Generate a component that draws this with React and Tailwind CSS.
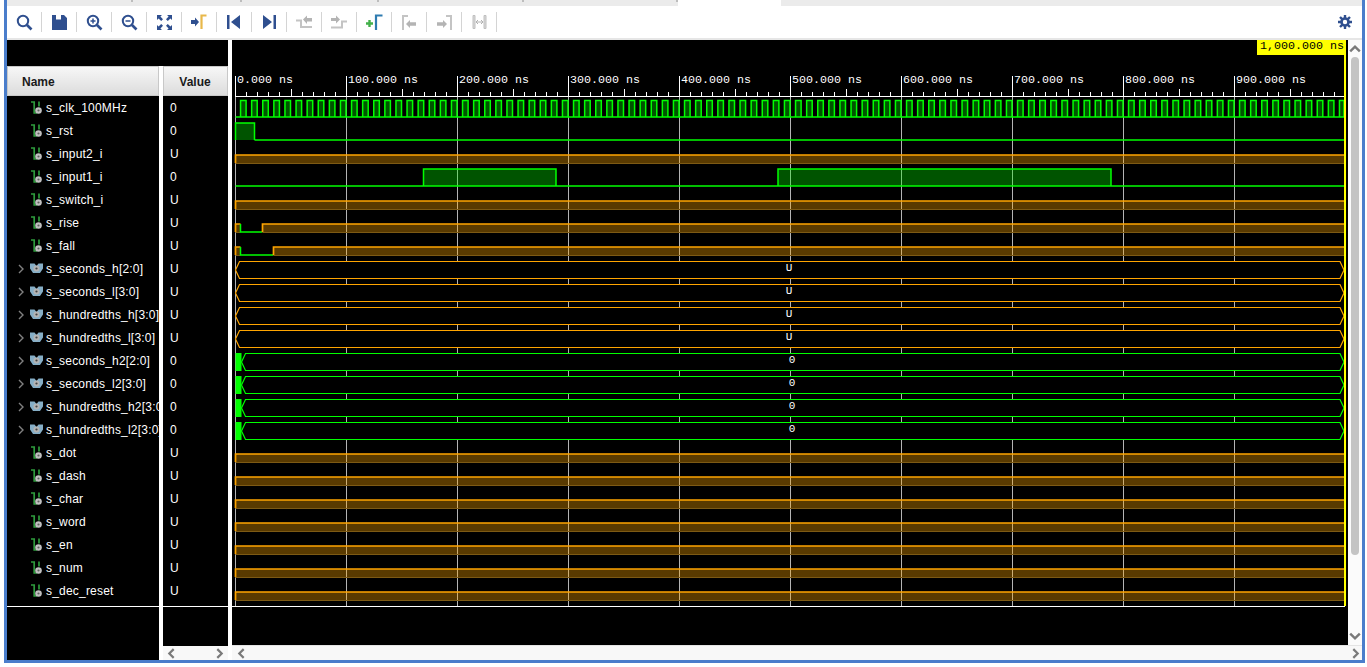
import React from "react";

const navy = "#2f4f8f";
const GREEN = "#00ff00";
const ORANGE = "#ffa500";

const rows = [
  { name: "s_clk_100MHz", value: "0", kind: "clk" },
  { name: "s_rst", value: "0", kind: "rst" },
  { name: "s_input2_i", value: "U", kind: "u" },
  { name: "s_input1_i", value: "0", kind: "input1" },
  { name: "s_switch_i", value: "U", kind: "u" },
  { name: "s_rise", value: "U", kind: "rise" },
  { name: "s_fall", value: "U", kind: "fall" },
  { name: "s_seconds_h[2:0]", value: "U", kind: "busU", bus: true },
  { name: "s_seconds_l[3:0]", value: "U", kind: "busU", bus: true },
  { name: "s_hundredths_h[3:0]", value: "U", kind: "busU", bus: true },
  { name: "s_hundredths_l[3:0]", value: "U", kind: "busU", bus: true },
  { name: "s_seconds_h2[2:0]", value: "0", kind: "bus0", bus: true },
  { name: "s_seconds_l2[3:0]", value: "0", kind: "bus0", bus: true },
  { name: "s_hundredths_h2[3:0]", value: "0", kind: "bus0", bus: true },
  { name: "s_hundredths_l2[3:0]", value: "0", kind: "bus0", bus: true },
  { name: "s_dot", value: "U", kind: "u" },
  { name: "s_dash", value: "U", kind: "u" },
  { name: "s_char", value: "U", kind: "u" },
  { name: "s_word", value: "U", kind: "u" },
  { name: "s_en", value: "U", kind: "u" },
  { name: "s_num", value: "U", kind: "u" },
  { name: "s_dec_reset", value: "U", kind: "u" },
];

const X0 = 235.5;
const X1 = 1344;
const tx = (ns) => 235 + ns * 1.11;

// toolbar icons
const Search = ({ plus, minus }) => (
  <svg width="17" height="17" viewBox="0 0 17 17" fill="none">
    <circle cx="7" cy="7" r="5.2" stroke={navy} strokeWidth="2" />
    <path d="M11 11l4.5 4.5" stroke={navy} strokeWidth="2.6" />
    {(plus || minus) && <path d="M4.5 7h5" stroke={navy} strokeWidth="1.5" />}
    {plus && <path d="M7 4.5v5" stroke={navy} strokeWidth="1.5" />}
  </svg>
);

const Save = () => (
  <svg width="15" height="15" viewBox="0 0 15 15">
    <path d="M0 0h4v4.5h5V0h3l3 3v12H0z" fill={navy} />
  </svg>
);

const Fit = () => (
  <svg width="15" height="15" viewBox="0 0 15 15" fill={navy}>
    <path d="M0 0h5L3.4 1.6 6 4.2 4.2 6 1.6 3.4 0 5z" />
    <path d="M15 0v5l-1.6-1.6L10.8 6 9 4.2l2.6-2.6L10 0z" />
    <path d="M0 15v-5l1.6 1.6L4.2 9 6 10.8l-2.6 2.6L5 15z" />
    <path d="M15 15h-5l1.6-1.6L9 10.8 10.8 9l2.6 2.6L15 10z" />
  </svg>
);

const ToCursor = () => (
  <svg width="16" height="16" viewBox="0 0 16 16">
    <path d="M0 6h4V3.5L8 8l-4 4.5V10H0z" fill={navy} />
    <path d="M10.5 15V1.5h5" fill="none" stroke="#e8b84a" strokeWidth="2.2" />
  </svg>
);

const Prev = () => (
  <svg width="14" height="14" viewBox="0 0 14 14" fill={navy}>
    <path d="M0 0h2.5v14H0zM13 0v14L4 7z" />
  </svg>
);

const Next = () => (
  <svg width="14" height="14" viewBox="0 0 14 14" fill={navy}>
    <path d="M1 0v14l9-7zM11.5 0H14v14h-2.5z" />
  </svg>
);

const PrevEdge = () => (
  <svg width="16" height="14" viewBox="0 0 16 14">
    <path d="M0 5.5h5V12h11" fill="none" stroke="#c4c4c4" strokeWidth="2" />
    <path d="M7 4.500L11 .5V3h5v3.500h-5V9z" fill="#b4b4b4" />
  </svg>
);

const NextEdge = () => (
  <svg width="16" height="14" viewBox="0 0 16 14">
    <path d="M0 3h5V.5L9 4.5 5 8.500V6H0z" fill="#b4b4b4" />
    <path d="M16 6.500h-5v6H0" fill="none" stroke="#c4c4c4" strokeWidth="2" />
  </svg>
);

const AddMarker = () => (
  <svg width="17" height="16" viewBox="0 0 17 16">
    <path d="M0 9.500h7M3.500 6v7" stroke="#43b04a" strokeWidth="2.4" />
    <path d="M10 16V1.500h6.500" fill="none" stroke="#2e7bb0" strokeWidth="2.2" />
  </svg>
);

const MarkerPrev = () => (
  <svg width="15" height="15" viewBox="0 0 15 15">
    <path d="M1 15V1h5" fill="none" stroke="#c4c4c4" strokeWidth="2" />
    <path d="M4 9l4-4v2.200h6v3.600H8V13z" fill="#b4b4b4" />
  </svg>
);

const MarkerNext = () => (
  <svg width="15" height="15" viewBox="0 0 15 15">
    <path d="M14 15V1H9" fill="none" stroke="#c4c4c4" strokeWidth="2" />
    <path d="M0 7.200h6V5l4 4-4 4v-2.200H0z" fill="#b4b4b4" />
  </svg>
);

const Swap = () => (
  <svg width="15" height="14" viewBox="0 0 15 14" fill="none">
    <path d="M1 .5v13h2V.5zM12 .5v13h2V.5z" fill="#d8d8d8" stroke="#c0c0c0" strokeWidth="1" />
    <path d="M4 7h7M4 7l2-2M4 7l2 2M11 7L9 5M11 7L9 9" stroke="#b0b0b0" strokeWidth="1" />
  </svg>
);

const Gear = () => (
  <svg width="14" height="14" viewBox="0 0 14 14">
    <circle cx="7" cy="7" r="3.5" fill="none" stroke={navy} strokeWidth="2.6" />
    <path
      d="M7 0v3M7 11v3M0 7h3M11 7h3M2 2l2.200 2.200M9.800 9.800L12 12M12 2L9.800 4.200M4.200 9.800L2 12"
      stroke={navy}
      strokeWidth="2.4"
    />
  </svg>
);

const toolbar = [
  <Search />,
  <Save />,
  <Search plus />,
  <Search minus />,
  <Fit />,
  <ToCursor />,
  <Prev />,
  <Next />,
  <PrevEdge />,
  <NextEdge />,
  <AddMarker />,
  <MarkerPrev />,
  <MarkerNext />,
  <Swap />,
];

const BitIcon = () => (
  <svg width="11" height="14" viewBox="0 0 11 14" className="ml-[1px] shrink-0">
    <path d="M0 1h3.200v11h3" fill="none" stroke="#2e9a3c" strokeWidth="1.7" />
    <path d="M8 .5v5" stroke="#2e9a3c" strokeWidth="1.7" />
    <circle cx="7.500" cy="9.500" r="3.300" fill="#c0c0c0" />
    <circle cx="7.500" cy="9.500" r="1.100" fill="#606060" />
  </svg>
);

const BusIcon = () => (
  <svg width="13" height="11" viewBox="0 0 13 11" className="shrink-0">
    <path d="M0 .5h4.500L6.500 3l2-2.500H13v5l-3 4.500H3L0 5.500z" fill="#86aec6" />
    <circle cx="6.500" cy="5.500" r="3" fill="#b4b4b4" />
    <circle cx="6.500" cy="5.500" r="1.100" fill="#444" />
  </svg>
);

const Chevron = ({ dir = "right", size = 8, color = "#7a7a7a", width = 1.5 }) => {
  const d = {
    right: "M3 1l4 4-4 4",
    left: "M7 1L3 5l4 4",
    up: "M1 7l4-4 4 4",
    down: "M1 3l4 4 4-4",
  }[dir];
  return (
    <svg width={size} height={size} viewBox="0 0 10 10" fill="none" className="shrink-0">
      <path d={d} stroke={color} strokeWidth={width} />
    </svg>
  );
};

const NameRow = ({ row }) => (
  <div className="flex h-[23px] items-center overflow-hidden whitespace-nowrap pl-[9px]">
    <div className="flex w-[14px] shrink-0 items-center">
      {row.bus && <Chevron size={10} color="#808080" width={1.4} />}
    </div>
    <div className="flex w-[16px] shrink-0 items-center">{row.bus ? <BusIcon /> : <BitIcon />}</div>
    <span className="text-[12px] tracking-[0.2px] text-white">{row.name}</span>
  </div>
);

// one waveform row; c is the text centre of that row
const Uband = ({ x1, x2, c }) => (
  <g>
    <rect x={x1} y={c + 2} width={x2 - x1} height={8} fill={ORANGE} fillOpacity="0.35" />
    <path d={`M${x1} ${c + 10.5}H${x2}`} stroke="#7d5a14" strokeWidth="1" />
    <path d={`M${x1} ${c + 10}V${c + 2}H${x2}`} fill="none" stroke={ORANGE} strokeWidth="1.7" />
  </g>
);

const Low = ({ x1, x2, c }) => <path d={`M${x1} ${c + 10}H${x2}`} stroke={GREEN} strokeWidth="1.5" />;

const High = ({ x1, x2, c, top = 7 }) => (
  <path
    d={`M${x1} ${c + 10}V${c - top}H${x2}V${c + 10}`}
    fill={GREEN}
    fillOpacity="0.33"
    stroke={GREEN}
    strokeWidth="1.5"
  />
);

const Hex = ({ x1, x2, c, color }) => (
  <path
    d={`M${x1 + 4} ${c - 6.5}H${x2 - 4}L${x2} ${c + 2}L${x2 - 4} ${c + 10.5}H${x1 + 4}L${x1} ${c + 2}Z`}
    fill="#000"
    stroke={color}
    strokeWidth="1.200"
  />
);

const busLabel = {
  fill: "#fff",
  fontSize: "11",
  fontFamily: "'Liberation Mono', monospace",
  textAnchor: "middle",
};

const Wave = ({ kind, c }) => {
  if (kind === "clk") {
    const pulses = [];
    for (let i = 0; i < 100; i++) {
      pulses.push(
        <High key={i} x1={tx(i * 10 + 5)} x2={Math.min(tx(i * 10 + 10), X1)} c={c} top={6.5} />
      );
    }
    return (
      <g>
        <Low x1={X0} x2={X1} c={c} />
        {pulses}
      </g>
    );
  }
  if (kind === "rst")
    return (
      <g>
        <High x1={X0} x2={254.5} c={c} />
        <Low x1={254.5} x2={X1} c={c} />
      </g>
    );
  if (kind === "u") return <Uband x1={X0} x2={X1} c={c} />;
  if (kind === "input1")
    return (
      <g>
        <Low x1={X0} x2={X1} c={c} />
        <High x1={423.5} x2={556} c={c} />
        <High x1={778} x2={1111} c={c} />
      </g>
    );
  if (kind === "rise" || kind === "fall") {
    const end = kind === "rise" ? 262.5 : 273.5;
    return (
      <g>
        <Uband x1={X0} x2={240.5} c={c} />
        <path d={`M240.5 ${c + 2}V${c + 10}H${end}`} fill="none" stroke={GREEN} strokeWidth="1.5" />
        <Uband x1={end} x2={X1} c={c} />
      </g>
    );
  }
  if (kind === "busU")
    return (
      <g>
        <Hex x1={X0} x2={X1} c={c} color={ORANGE} />
        <text x="789" y={c + 3} {...busLabel}>
          U
        </text>
      </g>
    );
  return (
    <g>
      <rect x={X0} y={c - 7} width={6} height={18} fill={GREEN} />
      <Hex x1={241.5} x2={X1} c={c} color={GREEN} />
      <text x="792" y={c + 3} {...busLabel}>
        0
      </text>
    </g>
  );
};

const WaveChart = () => {
  const majors = [0, 100, 200, 300, 400, 500, 600, 700, 800, 900];
  const minors = [];
  for (let i = 1; i < 100; i++) if (i % 10 !== 0) minors.push(i * 10);
  return (
    <svg width="1116" height="567" viewBox="232 40 1116 567" className="block shrink-0">
      <rect x="232" y="40" width="1116" height="567" fill="#000" />
      {/* grid */}
      {majors.map((ns) => (
        <path key={ns} d={`M${Math.round(tx(ns)) + 0.5} 96V606`} stroke="#b4b4b4" strokeWidth="1" />
      ))}
      {/* ruler */}
      <path d="M235 96.500H1345" stroke="#fff" strokeWidth="1" />
      {majors.map((ns) => (
        <g key={ns}>
          <path d={`M${Math.round(tx(ns)) + 0.5} 76V96`} stroke="#fff" strokeWidth="1" />
          <text
            x={Math.round(tx(ns)) + 2}
            y="83"
            fill="#fff"
            fontSize="11.67"
            fontFamily="'Liberation Mono', monospace"
          >
            {ns}.000 ns
          </text>
        </g>
      ))}
      {minors.map((ns) => (
        <path
          key={ns}
          d={`M${Math.round(tx(ns)) + 0.5} ${ns % 50 === 0 ? 89 : 92}V96`}
          stroke="#fff"
          strokeWidth="1"
        />
      ))}
      {rows.map((r, i) => (
        <Wave key={r.name} kind={r.kind} c={107 + 23 * i} />
      ))}
      <path d="M232 606.500H1345" stroke="#fff" strokeWidth="1" />
      {/* cursor */}
      <rect x="1344" y="40" width="2" height="566" fill="#ffff00" />
      <rect x="1257" y="40" width="87" height="15" fill="#ffff00" />
      <text x="1260" y="49" fill="#000" fontSize="11.67" fontFamily="'Liberation Mono', monospace">
        1,000.000 ns
      </text>
    </svg>
  );
};

const Header = ({ className, children }) => (
  <div
    className={`flex h-[30px] items-center border border-[#c8c8c8] bg-gradient-to-b from-[#f7f7f7] to-[#dcdcdc] pt-[1px] text-[12px] font-bold text-[#1a1a1a] ${className}`}
  >
    {children}
  </div>
);

const TabTick = ({ className }) => <div className={`h-[2px] w-[2px] bg-[#bdbdbd] ${className}`} />;

export default function App() {
  return (
    <div className="h-[667px] w-[1367px] overflow-hidden bg-white font-['Liberation_Sans',Arial,sans-serif]">
      <div className="ml-[4px] flex h-[663px] w-[1361px] flex-col border-x-[3px] border-b-[3px] border-[#4a7dcb]">
        {/* tab strip */}
        <div className="flex h-[6px] shrink-0 bg-[#ebebeb]">
          <TabTick className="ml-[124px]" />
          <TabTick className="ml-[107px]" />
          <TabTick className="ml-[135px]" />
          <TabTick className="ml-[143px]" />
          <TabTick className="ml-[152px]" />
          <div className="h-[6px] w-[103px] bg-white" />
        </div>

        {/* toolbar */}
        <div className="flex h-[32px] shrink-0 items-center bg-white">
          {toolbar.map((icon, i) => (
            <React.Fragment key={i}>
              <div className="flex w-[34px] items-center justify-center">{icon}</div>
              <div className="h-[20px] w-px bg-[#d4d4d4]" />
            </React.Fragment>
          ))}
          <div className="ml-auto flex w-[34px] items-center justify-center pr-[1px]">
            <Gear />
          </div>
        </div>
        <div className="h-[2px] shrink-0 bg-[#e6e6e6]" />

        {/* body */}
        <div className="flex min-h-0 flex-1 bg-white">
          <div className="flex w-[221px] shrink-0 flex-col">
            <div className="h-[26px] shrink-0 bg-black" />
            <div className="flex min-h-0 flex-1 gap-[4px]">
              {/* name column */}
              <div className="flex w-[152px] shrink-0 flex-col bg-black">
                <Header className="pl-[14px]">Name</Header>
                {rows.map((r) => (
                  <NameRow key={r.name} row={r} />
                ))}
                <div className="mt-[4px] h-px bg-white" />
              </div>

              {/* value column */}
              <div className="flex w-[65px] shrink-0 flex-col">
                <Header className="justify-center pr-[1px]">Value</Header>
                <div className="flex min-h-0 flex-1 flex-col bg-black">
                  {rows.map((r) => (
                    <div key={r.name} className="flex h-[23px] items-center pl-[7px] text-[12px] text-white">
                      {r.value}
                    </div>
                  ))}
                  <div className="mt-[4px] h-px bg-white" />
                </div>
                <div className="flex h-[14px] shrink-0 items-center justify-between bg-[#f8f8f8] px-[3px] pt-[1px]">
                  <Chevron dir="left" size={11} width={2} />
                  <Chevron dir="right" size={11} width={2} />
                </div>
              </div>
            </div>
          </div>

          <div className="w-[4px] shrink-0 bg-white" />

          {/* waveform side */}
          <div className="flex w-[1130px] shrink-0 flex-col">
            <div className="flex min-h-0 flex-1">
              <div className="w-[1116px] shrink-0 bg-black">
                <WaveChart />
              </div>
              <div className="flex w-[14px] shrink-0 flex-col items-center bg-[#fbfbfb] py-[3px]">
                <Chevron dir="up" size={12} width={2} />
                <div className="mt-[2px] h-[498px] w-[8px] rounded-full bg-[#c4c4c4]" />
                <div className="mt-auto">
                  <Chevron dir="down" size={12} width={2} />
                </div>
              </div>
            </div>
            <div className="flex h-[15px] shrink-0 items-center justify-between border-t border-[#e4e4e4] bg-[#f8f8f8] pl-[4px] pr-[1px] pt-[1px]">
              <Chevron dir="left" size={11} width={2} />
              <Chevron dir="right" size={11} width={2} />
            </div>
          </div>
        </div>
      </div>
    </div>
  );
}
